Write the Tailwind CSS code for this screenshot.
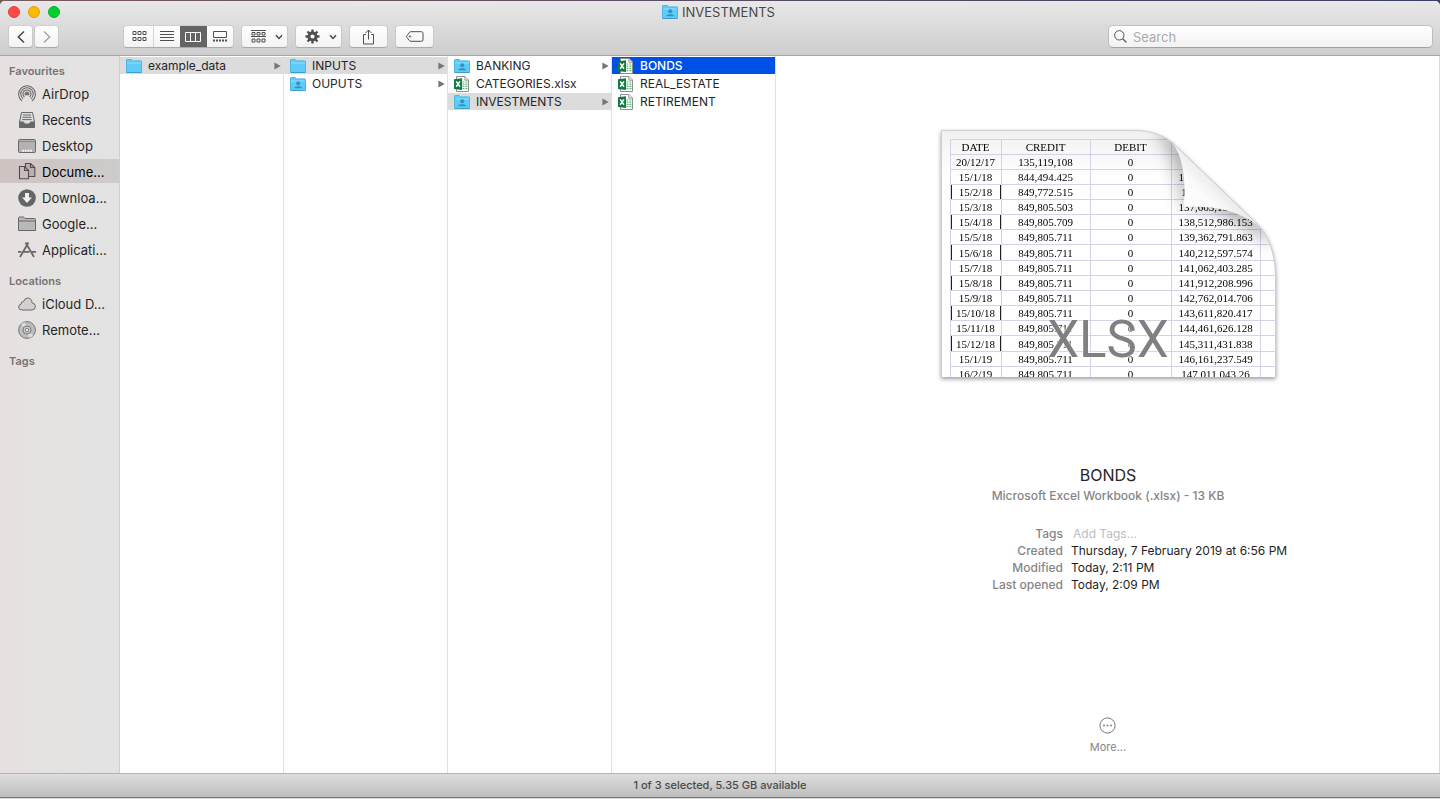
<!DOCTYPE html>
<html lang="en">
<head>
<meta charset="utf-8">
<title>INVESTMENTS</title>
<script src="https://cdn.jsdelivr.net/npm/@tailwindcss/browser@4"></script>
</head>
<body class="flex h-screen flex-col bg-linear-to-r from-[#79595f] to-[#3a3f63] pt-px font-['Inter',sans-serif] text-[#262626]">

<svg class="hidden">
  <defs>
    <symbol id="folder" viewBox="0 0 16 14">
      <path d="M.5 1.2Q.5.5 1.2.5H5.3L6.6 1.9H14.8Q15.5 1.9 15.5 2.6V12.8Q15.5 13.5 14.8 13.5H1.2Q.5 13.5.5 12.8Z" fill="#5fcbf8" stroke="#4ab6e4"/>
      <path d="M1 4H15" stroke="#8ddfff"/><path d="M.5 13.5H15.5" stroke="#399fce"/>
    </symbol>
    <symbol id="shared" viewBox="0 0 16 14">
      <use href="#folder"/>
      <ellipse cx="8.2" cy="6.3" rx="2.1" ry="2" fill="#3293c0"/><path d="M3.8 11.3Q4.4 9.7 7 9.3H9.4Q12 9.7 12.6 11.3Z" fill="#3293c0"/>
    </symbol>
    <symbol id="excel" viewBox="0 0 16 16">
      <path d="M2.5.5H11L14.5 4V15.5H2.5Z" fill="#fff" stroke="#8f8f8f"/>
      <path d="M10.8.7V4.2H14.5" fill="#e5e5e5" stroke="#8b8b8b" stroke-width=".8"/>
      <path d="M8.5 6H10.4M11.4 6H13.4M8.5 8.2H10.4M11.4 8.2H13.4M8.5 10.4H10.4M11.4 10.4H13.4M8.5 12.6H10.4M11.4 12.6H13.4" stroke="#5db77a" stroke-width="1.2"/>
      <path d="M0 3.2L8 2.2V14L0 12.9Z" fill="#127a43"/>
      <path d="M2.2 5.4L6 10.8M6 5.4L2.2 10.8" stroke="#fff" stroke-width="1.5"/>
    </symbol>
    <symbol id="arrow" viewBox="0 0 7 8"><path d="M.4.4L6.7 4L.4 7.6Z" fill="#757575"/></symbol>
    <symbol id="chev" viewBox="0 0 8 6"><path d="M1 1.2L4 4.4L7 1.2" fill="none" stroke="#4b4b4b" stroke-width="1.5"/></symbol>
  </defs>
</svg>

<div class="flex min-h-0 flex-1 flex-col overflow-hidden rounded-t-[5px] bg-white">
  <header class="shrink-0 border-b border-[#a5a5a5] bg-linear-to-b from-[#e8e8e8] to-[#cdcdcd] pb-[7px]">
    <div class="relative flex h-[22px] items-center justify-center">
      <div class="absolute top-[5px] left-2 flex gap-2">
        <button aria-label="Close" class="size-3 rounded-full border border-[#e33e38] bg-[#ff4b47]"></button>
        <button aria-label="Minimise" class="size-3 rounded-full border border-[#dfa000] bg-[#fdb900]"></button>
        <button aria-label="Zoom" class="size-3 rounded-full border border-[#00b320] bg-[#00d02e]"></button>
      </div>
      <h1 class="flex items-center gap-1 pr-[3px] text-[13px] leading-5 text-[#484848]"><svg class="h-[14px] w-4"><use href="#shared"/></svg>INVESTMENTS</h1>
    </div>
    <div class="mt-[2px] flex h-[23px] items-center pr-[7px] pl-2 text-[#4f4f4f]">
      <div class="flex gap-px">
        <button aria-label="Back" class="flex h-[23px] w-[25px] items-center justify-center rounded-[4px] border border-t-[#d0d0d0] border-r-[#c9c9c9] border-b-[#aaaaaa] border-l-[#c9c9c9] bg-linear-to-b from-white to-[#f3f3f3]"><svg width="8" height="14" viewBox="0 0 8 14"><path d="M7 1.5L1.3 7L7 12.5" fill="none" stroke="#4b4b4b" stroke-width="1.6"/></svg></button>
        <button aria-label="Forward" class="flex h-[23px] w-[25px] items-center justify-center rounded-[4px] border border-t-[#d0d0d0] border-r-[#c9c9c9] border-b-[#aaaaaa] border-l-[#c9c9c9] bg-linear-to-b from-white to-[#f3f3f3]"><svg width="8" height="14" viewBox="0 0 8 14"><path d="M1 1.5L6.7 7L1 12.5" fill="none" stroke="#a4a4a4" stroke-width="1.4"/></svg></button>
      </div>
      <div class="ml-16 flex h-[23px] w-[111px] overflow-hidden rounded-[4px] border border-t-[#d0d0d0] border-r-[#c9c9c9] border-b-[#aaaaaa] border-l-[#c9c9c9] bg-linear-to-b from-white to-[#f3f3f3]">
        <button aria-label="Icons" class="flex flex-1 items-center justify-center border-r border-[#d5d5d5] pl-[2px]"><svg width="15" height="11" viewBox="0 0 15 11" fill="none" stroke="#4f4f4f"><path d="M1 .5h3v3h-3zM6 .5h3v3h-3zM11 .5h3v3h-3zM1 6.5h3v3h-3zM6 6.5h3v3h-3zM11 6.5h3v3h-3z"/></svg></button>
        <button aria-label="List" class="flex flex-1 items-center justify-center"><svg width="14" height="11" viewBox="0 0 14 11" stroke="#4f4f4f"><path d="M0 .5H14M0 3.5H14M0 6.5H14M0 9.5H14"/></svg></button>
        <button aria-label="Columns" aria-pressed="true" class="-my-px flex flex-1 items-center justify-center bg-[#646464]"><svg width="16" height="10" viewBox="0 0 16 10" fill="none" stroke="#fff"><path d="M.5.5h15v9H.5zM5.5.5v9M10.5.5v9"/></svg></button>
        <button aria-label="Gallery" class="flex flex-1 items-center justify-center"><svg width="14" height="11" viewBox="0 0 14 11" fill="none" stroke="#4f4f4f"><path d="M.5.5h13v6H.5z"/><path d="M0 9.5H14" stroke-width="2" stroke-dasharray="2 1"/></svg></button>
      </div>
      <button aria-label="Arrange" class="ml-[7px] flex h-[23px] w-[47px] items-center justify-end gap-[9px] rounded-[4px] border border-t-[#d0d0d0] border-r-[#c9c9c9] border-b-[#aaaaaa] border-l-[#c9c9c9] bg-linear-to-b from-white to-[#f3f3f3] pr-1"><svg width="15" height="13" viewBox="0 0 15 13" fill="none" stroke="#4f4f4f"><path d="M0 .5H15M0 6.5H15M1 2.5h3v2.5h-3zM6 2.5h3v2.5h-3zM11 2.5h3v2.5h-3zM1 9h3v3h-3zM6 9h3v3h-3zM11 9h3v3h-3z"/></svg><svg width="8" height="6"><use href="#chev"/></svg></button>
      <button aria-label="Action" class="ml-[7px] flex h-[23px] w-[47px] items-center justify-end gap-[9px] rounded-[4px] border border-t-[#d0d0d0] border-r-[#c9c9c9] border-b-[#aaaaaa] border-l-[#c9c9c9] bg-linear-to-b from-white to-[#f3f3f3] pr-1"><svg width="15" height="15" viewBox="-7.5 -7.5 15 15" stroke="#4f4f4f"><circle r="3.6" fill="none" stroke-width="3"/><path d="M0-7V-4M0 7V4M-7 0H-4M7 0H4M-5-5L-3-3M5 5L3 3M-5 5L-3 3M5-5L3-3" stroke-width="2.4"/></svg><svg width="8" height="6"><use href="#chev"/></svg></button>
      <button aria-label="Share" class="ml-[7px] flex h-[23px] w-[39px] items-center justify-center rounded-[4px] border border-t-[#d0d0d0] border-r-[#c9c9c9] border-b-[#aaaaaa] border-l-[#c9c9c9] bg-linear-to-b from-white to-[#f3f3f3]"><svg width="13" height="16" viewBox="0 0 13 16" fill="none" stroke="#4f4f4f"><path d="M4 5.5H1.5V15H11.5V5.5H9M6.5 10.5V1M3.5 4L6.5 1L9.5 4"/></svg></button>
      <button aria-label="Edit tags" class="ml-[7px] flex h-[23px] w-[39px] items-center justify-center rounded-[4px] border border-t-[#d0d0d0] border-r-[#c9c9c9] border-b-[#aaaaaa] border-l-[#c9c9c9] bg-linear-to-b from-white to-[#f3f3f3]"><svg width="18" height="11" viewBox="0 0 18 11" fill="none" stroke="#4f4f4f"><path d="M5 .7H15.5Q17 .7 17 2.2V8.8Q17 10.3 15.5 10.3H5Q4 10.3 3.3 9.5L1 6.5Q.3 5.5 1 4.5L3.3 1.5Q4 .7 5 .7Z"/><circle cx="4" cy="5.5" r=".7"/></svg></button>
      <label class="ml-auto flex h-[23px] w-[325px] items-center gap-[6px] rounded-[5px] border border-t-[#c2c2c2] border-r-[#bdbdbd] border-b-[#a2a2a2] border-l-[#bdbdbd] bg-linear-to-b from-white to-[#f2f2f2] pl-[5px]">
        <svg width="13" height="13" viewBox="0 0 13 13" fill="none" stroke="#555"><circle cx="5.3" cy="5.3" r="4.7"/><path d="M8.7 8.7L12.4 12.4" stroke-width="1.3"/></svg>
        <input type="search" aria-label="Search" placeholder="Search" class="min-w-0 flex-1 bg-transparent text-[13px] leading-5 outline-none placeholder:text-[#ababab]">
      </label>
    </div>
  </header>

  <main class="flex min-h-0 flex-1">
    <nav class="flex w-[120px] shrink-0 flex-col gap-[2px] border-r border-[#cfcdcd] bg-linear-to-r from-[#e6e1e0] to-[#e3e3e3] pt-[7px] text-[13px] leading-5 [&>a]:pt-[2px]">
      <h2 class="pl-[9px] text-[11px] leading-4 font-semibold text-[#757373]">Favourites</h2>
      <a href="#airdrop" class="flex h-6 items-center gap-[6px] pl-[18px]"><svg class="shrink-0" width="18" height="18" viewBox="0 0 18 18" fill="none" stroke="#686868" stroke-width="1.1"><path d="M4.2 16.1A8.4 8.4 0 1 1 13.8 16.1M5.2 13.9A6.2 6.2 0 1 1 12.8 13.9M6.4 12A4 4 0 1 1 11.6 12M7.8 10.4A1.9 1.9 0 1 1 10.2 10.4"/><circle cx="9" cy="9" r=".8" fill="#686868"/></svg>AirDrop</a>
      <a href="#recents" class="flex h-6 items-center gap-[6px] pl-[18px]"><svg class="shrink-0" width="18" height="18" viewBox="0 0 18 18" fill="none" stroke="#686868"><path d="M3.5 1.5H14.5L16.5 11V15.5Q16.5 16.5 15.5 16.5H2.5Q1.5 16.5 1.5 15.5V11Z" fill="#dedede"/><path d="M5 4H13M4.5 6.3H13.5M4.2 8.6H13.8"/><path d="M1.5 11H5.5Q6 13 7.5 13H10.5Q12 13 12.5 11H16.5V16.5H1.5Z" fill="#686868"/></svg>Recents</a>
      <a href="#desktop" class="flex h-6 items-center gap-[6px] pl-[18px]"><svg class="shrink-0" width="18" height="18" viewBox="0 0 18 18" fill="none" stroke="#686868"><rect x=".5" y="2.5" width="17" height="13" rx="1" fill="#b2b2b2"/><path d="M1 4.5H17" stroke="#8c8c8c"/><path d="M4 13.8H14" stroke="#f0f0f0" stroke-width="2" stroke-dasharray="2 .7"/></svg>Desktop</a>
      <a href="#documents" aria-current="page" class="flex h-6 items-center gap-[6px] bg-linear-to-r from-[#cfc3c2] to-[#cdcbcb] pl-[18px] text-black"><svg class="shrink-0" width="18" height="18" viewBox="0 0 18 18" stroke="#554d4d" stroke-width="1.1"><path d="M7.5.5H12.5L16.8 4.5V13.5H7.5Z" fill="#bab0b0"/><path d="M12.5.5V4.5H16.8" fill="none"/><path d="M1.5 3.5H6.5L10.5 7.5V15.8H1.5Z" fill="#c8bebe"/><path d="M6.5 3.5V7.5H10.5" fill="none"/></svg>Docume...</a>
      <a href="#downloads" class="flex h-6 items-center gap-[6px] pl-[18px]"><svg class="shrink-0" width="18" height="18" viewBox="0 0 18 18"><circle cx="9" cy="9" r="8.8" fill="#656565"/><path d="M7 4H11V8.5H14L9 14L4 8.5H7Z" fill="#f0f0f0"/></svg>Downloa...</a>
      <a href="#google" class="flex h-6 items-center gap-[6px] pl-[18px]"><svg class="shrink-0" width="18" height="18" viewBox="0 0 18 18" fill="#b9b8b8" stroke="#686868"><path d="M.5 3Q.5 2 1.5 2H5.5Q6 2 6.5 3L7 3.5H16.5Q17.5 3.5 17.5 4.5V15.5H.5Z"/><path d="M.5 6H17.5"/></svg>Google...</a>
      <a href="#applications" class="flex h-6 items-center gap-[6px] pl-[18px]"><svg class="shrink-0" width="18" height="18" viewBox="0 0 18 18" fill="none" stroke="#686868" stroke-width="1.8"><path d="M7.5 1.5L16 16M10.5 1.5L2 16M0 10.8H3.5M5.5 10.8H11.5M14 10.8H18"/></svg>Applicati...</a>
      <h2 class="mt-[10px] pl-[9px] text-[11px] leading-4 font-semibold text-[#757373]">Locations</h2>
      <a href="#icloud" class="flex h-6 items-center gap-[6px] pl-[18px]"><svg class="shrink-0" width="18" height="18" viewBox="0 0 18 18" fill="#d0d0d0" stroke="#6b6b6b"><path d="M4 15Q.6 15 .6 12Q.6 9.5 3.2 9Q3 6.3 5.6 6.4Q6.7 3 9.8 3Q13.8 3.2 14 7.8Q17.4 8.4 17.4 11.5Q17.2 15 14 15Z"/></svg>iCloud D...</a>
      <a href="#remote" class="flex h-6 items-center gap-[6px] pl-[18px]"><svg class="shrink-0" width="18" height="18" viewBox="0 0 18 18" fill="none" stroke="#777"><circle cx="9" cy="9" r="8.4" fill="#bdbdbd"/><path d="M9 9L3 3.5A8 8 0 0 1 7 1.2ZM9 9L15 14.5A8 8 0 0 1 11 16.8Z" fill="#dedede" stroke="none"/><circle cx="9" cy="9" r="4" fill="#d2d2d2"/><circle cx="9" cy="9" r="1.8" fill="#eee"/></svg>Remote...</a>
      <h2 class="mt-[10px] pl-[9px] text-[11px] leading-4 font-semibold text-[#757373]">Tags</h2>
    </nav>

    <section aria-label="Documents" class="flex w-[164px] shrink-0 flex-col gap-px border-r border-[#e0e0e0] pt-px text-[12px]">
      <button class="flex h-[17px] w-full items-center bg-[#dcdcdc] pr-[2px] pl-[6px]"><svg class="mr-[6px] h-[14px] w-4"><use href="#folder"/></svg>example_data<svg class="ml-auto h-2 w-[7px]"><use href="#arrow"/></svg></button>
    </section>
    <section aria-label="example_data" class="flex w-[164px] shrink-0 flex-col gap-px border-r border-[#e0e0e0] pt-px text-[12px]">
      <button class="flex h-[17px] w-full items-center bg-[#dcdcdc] pr-[2px] pl-[6px]"><svg class="mr-[6px] h-[14px] w-4"><use href="#folder"/></svg>INPUTS<svg class="ml-auto h-2 w-[7px]"><use href="#arrow"/></svg></button>
      <button class="flex h-[17px] w-full items-center pr-[2px] pl-[6px]"><svg class="mr-[6px] h-[14px] w-4"><use href="#shared"/></svg>OUPUTS<svg class="ml-auto h-2 w-[7px]"><use href="#arrow"/></svg></button>
    </section>
    <section aria-label="INPUTS" class="flex w-[164px] shrink-0 flex-col gap-px border-r border-[#e0e0e0] pt-px text-[12px]">
      <button class="flex h-[17px] w-full items-center pr-[2px] pl-[6px]"><svg class="mr-[6px] h-[14px] w-4"><use href="#shared"/></svg>BANKING<svg class="ml-auto h-2 w-[7px]"><use href="#arrow"/></svg></button>
      <button class="flex h-[17px] w-full items-center pr-[2px] pl-[6px]"><svg class="mr-[6px] size-4"><use href="#excel"/></svg>CATEGORIES.xlsx</button>
      <button class="flex h-[17px] w-full items-center bg-[#dcdcdc] pr-[2px] pl-[6px]"><svg class="mr-[6px] h-[14px] w-4"><use href="#shared"/></svg>INVESTMENTS<svg class="ml-auto h-2 w-[7px]"><use href="#arrow"/></svg></button>
    </section>
    <section aria-label="INVESTMENTS" class="flex w-[164px] shrink-0 flex-col gap-px border-r border-[#e0e0e0] pt-px text-[12px]">
      <button class="flex h-[17px] w-full items-center bg-[#0050e6] pl-[6px] font-medium text-white"><svg class="mr-[6px] size-4"><use href="#excel"/></svg>BONDS</button>
      <button class="flex h-[17px] w-full items-center pl-[6px]"><svg class="mr-[6px] size-4"><use href="#excel"/></svg>REAL_ESTATE</button>
      <button class="flex h-[17px] w-full items-center pl-[6px]"><svg class="mr-[6px] size-4"><use href="#excel"/></svg>RETIREMENT</button>
    </section>

    <section aria-label="Preview" class="flex min-w-0 flex-1 flex-col items-center border-r border-[#d9d9d9] pt-[74px] pb-[18px] pl-px">
      <!-- Sheet thumbnail with a curled corner -->
      <div class="relative h-[247px] w-[335px] shrink-0 drop-shadow-[0_2px_2px_rgba(0,0,0,0.4)]">
        <div class="h-full overflow-hidden bg-white bg-linear-to-b from-[#f1f1f1] to-white to-20% pt-[9px] pl-[9px] [clip-path:path('M0,0H192C212,0_224,6_234,15L312,90C326,102_335,120_335,150V247H0Z')]">
          <table class="w-[340px] table-fixed border-collapse text-center font-['Liberation_Serif',serif] text-[11px] leading-[14px] text-black [&_td]:border [&_td]:border-[#d3d2e6] [&_td]:p-0 [&_th]:border [&_th]:border-[#d3d2e6] [&_th]:p-0 [&_th]:font-normal">
            <colgroup><col class="w-[51px]"><col class="w-[89px]"><col class="w-[81px]"><col class="w-[89px]"><col></colgroup>
            <thead><tr><th>DATE</th><th>CREDIT</th><th>DEBIT</th><th></th><th></th></tr></thead>
            <tbody>
              <tr><td>20/12/17</td><td>135,119,108</td><td>0</td><td></td><td></td></tr>
              <tr><td>15/1/18</td><td>844,494.425</td><td>0</td><td>135,963,602.425</td><td></td></tr>
              <tr><td class="shadow-[inset_1px_0_#222,inset_-1px_0_#222]">15/2/18</td><td>849,772.515</td><td>0</td><td>136,813,374.94</td><td></td></tr>
              <tr><td>15/3/18</td><td>849,805.503</td><td>0</td><td>137,663,180.443</td><td></td></tr>
              <tr><td class="shadow-[inset_1px_0_#222,inset_-1px_0_#222]">15/4/18</td><td>849,805.709</td><td>0</td><td>138,512,986.153</td><td></td></tr>
              <tr><td>15/5/18</td><td>849,805.711</td><td>0</td><td>139,362,791.863</td><td></td></tr>
              <tr class="h-4"><td class="shadow-[inset_1px_0_#222,inset_-1px_0_#222]">15/6/18</td><td>849,805.711</td><td>0</td><td>140,212,597.574</td><td></td></tr>
              <tr><td>15/7/18</td><td>849,805.711</td><td>0</td><td>141,062,403.285</td><td></td></tr>
              <tr><td class="shadow-[inset_1px_0_#222,inset_-1px_0_#222]">15/8/18</td><td>849,805.711</td><td>0</td><td>141,912,208.996</td><td></td></tr>
              <tr><td>15/9/18</td><td>849,805.711</td><td>0</td><td>142,762,014.706</td><td></td></tr>
              <tr><td class="shadow-[inset_1px_0_#222,inset_-1px_0_#222]">15/10/18</td><td>849,805.711</td><td>0</td><td>143,611,820.417</td><td></td></tr>
              <tr><td>15/11/18</td><td>849,805.711</td><td>0</td><td>144,461,626.128</td><td></td></tr>
              <tr class="h-4"><td class="shadow-[inset_1px_0_#222,inset_-1px_0_#222]">15/12/18</td><td>849,805.711</td><td>0</td><td>145,311,431.838</td><td></td></tr>
              <tr><td>15/1/19</td><td>849,805.711</td><td>0</td><td>146,161,237.549</td><td></td></tr>
              <tr><td>16/2/19</td><td>849,805.711</td><td>0</td><td>147,011,043.26</td><td></td></tr>
            </tbody>
          </table>
        </div>
        <svg class="absolute inset-0" width="335" height="247" viewBox="0 0 335 247">
          <defs>
            <clipPath id="sheet"><path d="M0 0H192C212 0 224 6 234 15L312 90C326 102 335 120 335 150V247H0Z"/></clipPath>
            <linearGradient id="curl" gradientUnits="userSpaceOnUse" x1="243" y1="78" x2="276" y2="46"><stop offset="0" stop-color="#fff"/><stop offset=".5" stop-color="#fbfbfb"/><stop offset=".85" stop-color="#ececec"/><stop offset="1" stop-color="#fafafa"/></linearGradient>
            <filter id="soft" x="-50%" y="-50%" width="200%" height="200%"><feGaussianBlur stdDeviation="9"/></filter>
          </defs>
          <g clip-path="url(#sheet)">
            <path d="M222 0C238 18 243 40 246 68C268 72 300 80 328 108L300 78L236 16Z" fill="none" stroke="#000" stroke-opacity=".42" stroke-width="9" filter="url(#soft)"/>
            <path d="M230 11C242 26 245 48 243 77C266 76 292 77 318 96L312 90L234 15Z" fill="url(#curl)"/>
          </g>
          <path d="M.5 247V.5H192C212 .5 224 6 234 15L312 90C326 102 334.5 120 334.5 150V247" fill="none" stroke="#cfcfcf"/>
        </svg>
        <span class="absolute inset-x-0 top-[180px] text-center font-['Roboto',sans-serif] text-[51px] leading-[60px] text-[#808080] [text-shadow:0_0_2px_#fff,0_0_3px_#fff]">XLSX</span>
      </div>

      <h2 class="mt-[88px] text-[16px] leading-5">BONDS</h2>
      <p class="mt-[2px] text-[12px] leading-[18px] font-medium text-[#858585]">Microsoft Excel Workbook (.xlsx) - 13 KB</p>
      <dl class="mt-5 grid w-full grid-cols-[286px_1fr] gap-x-2 text-[12px] leading-[17px] text-[#1f1f1f] [&_dt]:text-right [&_dt]:font-medium [&_dt]:text-[#858585]">
        <dt><label for="tags">Tags</label></dt><dd class="flex"><input id="tags" placeholder="Add Tags..." class="h-[17px] w-40 pl-[2px] outline-none placeholder:text-[#bdbdbd]"></dd>
        <dt>Created</dt><dd>Thursday, 7 February 2019 at 6:56 PM</dd>
        <dt>Modified</dt><dd>Today, 2:11 PM</dd>
        <dt>Last opened</dt><dd>Today, 2:09 PM</dd>
      </dl>
      <button class="mt-auto flex flex-col items-center gap-[5px] text-[11px] leading-4 text-[#858585]"><svg width="17" height="17" viewBox="0 0 17 17" fill="#777"><circle cx="8.5" cy="8.5" r="7.6" fill="none" stroke="#777"/><circle cx="5" cy="8.5" r=".9"/><circle cx="8.5" cy="8.5" r=".9"/><circle cx="12" cy="8.5" r=".9"/></svg>More...</button>
    </section>
  </main>

  <footer class="flex h-6 shrink-0 items-center justify-center border-t border-[#b4b4b4] bg-linear-to-b from-[#dedede] to-[#bebebe] text-[11px] font-medium text-[#4a4a4a]">1 of 3 selected, 5.35 GB available</footer>
</div>
<div class="h-[2px] shrink-0 border-t border-[#777] bg-[#dadada]"></div>
</body>
</html>
